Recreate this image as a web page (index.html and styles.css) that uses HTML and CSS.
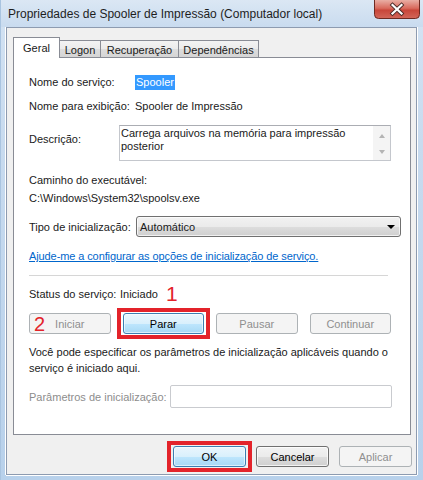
FILE: index.html
```html
<!DOCTYPE html>
<html lang="pt">
<head>
<meta charset="utf-8">
<title>Propriedades de Spooler de Impressão</title>
<link rel="stylesheet" href="styles.css">
</head>
<body>
<div class="window">
  <div class="titlebar">
    <span class="title">Propriedades de Spooler de Impressão (Computador local)</span>
    <div class="close">
      <svg width="46" height="19" viewBox="0 0 46 19">
        <defs>
          <linearGradient id="cg" x1="0" y1="0" x2="0" y2="1">
            <stop offset="0" stop-color="#e9aea4"/>
            <stop offset="0.45" stop-color="#d8695c"/>
            <stop offset="0.55" stop-color="#c8463a"/>
            <stop offset="1" stop-color="#d2675a"/>
          </linearGradient>
        </defs>
        <path d="M0.5 0 V14.5 Q0.5 18.5 4.5 18.5 H41.5 Q45.5 18.5 45.5 14.5 V0" fill="url(#cg)" stroke="#6e2a22"/>
        <path d="M18.5 5 L27.5 13.5 M27.5 5 L18.5 13.5" stroke="#4a2b28" stroke-width="4" stroke-linecap="square"/>
        <path d="M18.5 5 L27.5 13.5 M27.5 5 L18.5 13.5" stroke="#ffffff" stroke-width="2.2" stroke-linecap="square"/>
      </svg>
    </div>
  </div>
  <div class="client">
    <div class="tabs">
      <div class="tab active t-geral">Geral</div>
      <div class="tab t-logon">Logon</div>
      <div class="tab t-rec">Recuperação</div>
      <div class="tab t-dep">Dependências</div>
    </div>
    <div class="panel">
      <div class="row r-name"><span class="lbl lw-name">Nome do serviço:</span><span class="selected-text">Spooler</span></div>
      <div class="row r-display"><span class="lbl lw-name">Nome para exibição:</span><span class="value">Spooler de Impressão</span></div>
      <div class="row r-desc">
        <span class="lbl lw-desc desc-lbl">Descrição:</span>
        <div class="textbox">
          <div class="textbox-text">Carrega arquivos na memória para impressão<br>posterior</div>
          <div class="vscroll"><span class="arr-up"></span><span class="arr-down"></span></div>
        </div>
      </div>
      <div class="path-lbl">Caminho do executável:</div>
      <div class="path-val">C:\Windows\System32\spoolsv.exe</div>
      <div class="row r-type">
        <span class="lbl lw-type">Tipo de inicialização:</span>
        <div class="combo"><span class="combo-text">Automático</span><span class="combo-arrow"></span></div>
      </div>
      <a class="link">Ajude-me a configurar as opções de inicialização de serviço.</a>
      <div class="separator"></div>
      <div class="row r-status"><span class="lbl lw-status">Status do serviço:</span><span class="value">Iniciado</span><span class="mark mark-1">1</span></div>
      <div class="svc-buttons">
        <button class="btn disabled">Iniciar</button>
        <button class="btn focused boxed">Parar</button>
        <button class="btn disabled">Pausar</button>
        <button class="btn disabled">Continuar</button>
        <span class="mark mark-2">2</span>
      </div>
      <p class="note">Você pode especificar os parâmetros de inicialização aplicáveis quando o<br>serviço é iniciado aqui.</p>
      <div class="row r-params">
        <span class="lbl lw-params disabled-text">Parâmetros de inicialização:</span>
        <div class="input disabled-input"></div>
      </div>
    </div>
    <div class="footer">
      <button class="btn focused boxed fbtn">OK</button>
      <button class="btn fbtn">Cancelar</button>
      <button class="btn disabled fbtn">Aplicar</button>
    </div>
  </div>
</div>
</body>
</html>
```

FILE: styles.css
```css
* { box-sizing: border-box; }

html, body {
  margin: 0;
  padding: 0;
}

body {
  width: 423px;
  height: 480px;
  overflow: hidden;
  font-family: "Liberation Sans", Arial, sans-serif;
  font-size: 11px;
  color: #1a1a1a;
  background: linear-gradient(180deg, #d4e3f3 0%, #c8dbef 30%, #b8d1eb 100%);
}

.window {
  width: 423px;
  height: 480px;
  display: flex;
  flex-direction: column;
  border-left: 1px solid #a9c4e0;
}

.titlebar {
  height: 27px;
  display: flex;
  justify-content: space-between;
  align-items: flex-start;
  background: linear-gradient(180deg, #dbe7f4 0%, #d0e0f1 60%, #c9dbef 100%);
}

.title {
  font-size: 12px;
  color: #1e1e1e;
  padding: 6px 0 0 7px;
  line-height: 16px;
}

.close {
  width: 46px;
  height: 19px;
  margin-right: 3px;
}

.close svg { display: block; }

.client {
  margin-left: 5px;
  width: 411px;
  height: 448px;
  background: #f0f0f0;
  border: 1px solid #8d9bb0;
  padding: 9px 4px 0 6px;
  display: flex;
  flex-direction: column;
  box-shadow: -1px 0 0 #ffffff, 1px 0 0 #ffffff, 0 1px 0 #ffffff;
}

.tabs {
  height: 20px;
  display: flex;
  align-items: flex-end;
  position: relative;
  z-index: 2;
}

.tab {
  height: 17px;
  border: 1px solid #898c95;
  border-bottom: none;
  background: linear-gradient(180deg, #f3f3f3 0%, #ebebeb 50%, #dddddd 51%, #d5d5d5 100%);
  display: flex;
  align-items: center;
  justify-content: center;
  margin-left: -1px;
  color: #1a1a1a;
  padding-top: 1px;
}

.tab.active {
  height: 21px;
  margin-left: 0;
  margin-bottom: -1px;
  background: #ffffff;
  z-index: 3;
  padding-bottom: 2px;
}

.t-geral { width: 47px; }
.t-logon { width: 42px; }
.t-rec { width: 79px; }
.t-dep { width: 81px; }

.panel {
  width: 398px;
  height: 378px;
  background: #ffffff;
  border: 1px solid #898c95;
  padding: 16px 0 0 15px;
  position: relative;
  z-index: 1;
}

.row {
  display: flex;
  align-items: center;
  line-height: 16px;
}

.lbl { flex: none; }
.lw-name { width: 106px; }
.lw-desc { width: 90px; }
.lw-type { width: 107px; }
.lw-status { width: 91px; }
.lw-params { width: 141px; }

.selected-text {
  background: #3399ff;
  color: #ffffff;
  padding: 0 1px;
  line-height: 15px;
}

.value { color: #1a1a1a; }

.r-display { margin-top: 8px; }

.r-desc {
  margin-top: 11px;
  align-items: flex-start;
}

.desc-lbl { margin-top: 6px; }

.textbox {
  width: 272px;
  height: 36px;
  border: 1px solid #c4c7cd;
  border-top-color: #abadb3;
  display: flex;
  justify-content: space-between;
}

.textbox-text {
  padding: 1px 0 0 1px;
  line-height: 13px;
}

.vscroll {
  width: 17px;
  height: 100%;
  background: #f4f4f4;
  display: flex;
  flex-direction: column;
  align-items: center;
  justify-content: space-between;
  padding: 8px 0 6px;
}

.arr-up, .arr-down {
  width: 0;
  height: 0;
  border-left: 3.5px solid transparent;
  border-right: 3.5px solid transparent;
}
.arr-up { border-bottom: 4px solid #b4b4b4; }
.arr-down { border-top: 4px solid #b4b4b4; }

.path-lbl {
  margin-top: 11px;
  line-height: 16px;
}

.path-val {
  margin-top: 2px;
  line-height: 16px;
}

.r-type { margin-top: 10px; }

.combo {
  width: 265px;
  height: 21px;
  border: 1px solid #707070;
  border-radius: 3px;
  background: linear-gradient(180deg, #f2f2f2 0%, #ebebeb 50%, #dddddd 51%, #cfcfcf 100%);
  display: flex;
  align-items: center;
  justify-content: space-between;
  padding: 0 5px 0 3px;
  box-shadow: inset 0 0 0 1px rgba(255,255,255,0.7);
}

.combo-arrow {
  width: 0;
  height: 0;
  border-left: 4px solid transparent;
  border-right: 4px solid transparent;
  border-top: 4px solid #000000;
}

.link {
  display: block;
  margin-top: 11px;
  line-height: 16px;
  color: #0066cc;
  text-decoration: underline;
  letter-spacing: -0.1px;
}

.separator {
  width: 359px;
  margin-top: 11px;
  border-top: 1px solid #d6d6d6;
}

.r-status { margin-top: 10px; }

.mark {
  color: #e3232a;
  font-family: "Liberation Sans", Arial, sans-serif;
  font-size: 21px;
  line-height: 16px;
}

.mark-1 { margin-left: 8px; }

.svc-buttons {
  margin-top: 11px;
  width: 362px;
  display: flex;
  gap: 12px;
  position: relative;
}

.svc-buttons .btn { flex: 1; }

.mark-2 {
  position: absolute;
  left: 5px;
  top: 3px;
  font-size: 20px;
}

.btn {
  position: relative;
  height: 21px;
  border: 1px solid #707070;
  border-radius: 3px;
  background: linear-gradient(180deg, #f2f2f2 0%, #ebebeb 50%, #dddddd 51%, #cfcfcf 100%);
  font-family: "Liberation Sans", Arial, sans-serif;
  font-size: 11px;
  color: #000000;
  padding: 0;
  margin: 0;
  box-shadow: inset 0 0 0 1px rgba(255,255,255,0.75);
}

.btn.disabled {
  border-color: #adb2b5;
  background: #f4f4f4;
  color: #8f8f8f;
  box-shadow: none;
}

.btn.focused {
  border-color: #3c7fb1;
  background: linear-gradient(180deg, #eaf6fd 0%, #d9f0fc 50%, #bee6fd 51%, #a7d9f5 100%);
  box-shadow: inset 0 0 0 1px rgba(255,255,255,0.6);
}

.btn.boxed::after {
  content: "";
  position: absolute;
  left: -7px;
  right: -7px;
  top: -6px;
  bottom: -6px;
  border: 4px solid #e3232a;
}

.note {
  margin: 10px 0 0;
  line-height: 16px;
}

.r-params { margin-top: 9px; }

.disabled-text { color: #8d8d8d; }

.input {
  width: 222px;
  height: 23px;
  background: #ffffff;
}

.disabled-input {
  border: 1px solid #c9cbcf;
  border-radius: 2px;
}

.footer {
  margin-top: 11px;
  display: flex;
  justify-content: flex-end;
  gap: 10px;
}

.fbtn { width: 73px; }
```
